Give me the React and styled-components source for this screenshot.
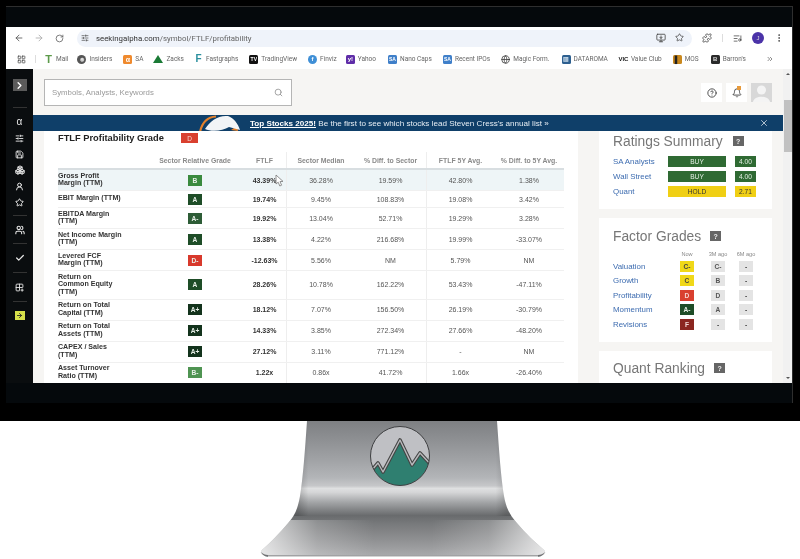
import React from 'react';
import styled, { createGlobalStyle } from 'styled-components';
import {
  ArrowLeft, ArrowRight, RotateCw, SlidersHorizontal, Star, Puzzle, MonitorDown, ListMusic, EllipsisVertical,
  ChevronRight, Search, CircleHelp, Bell, X, Save, UserRound, Users, Check, Grid2x2Plus, Boxes,
  ChevronsRight, Globe, LayoutGrid,
} from 'lucide-react';

const GlobalStyle = createGlobalStyle`
  html, body { margin: 0; padding: 0; background: #fff; }
  body { font-family: "Liberation Sans", Arial, sans-serif; width: 800px; height: 559px; overflow: hidden; }
`;

const Page = styled.div`
  width: 800px;
  height: 559px;
  display: flex;
  flex-direction: column;
  overflow: hidden;
`;

const Monitor = styled.div`
  width: 800px;
  background: #000;
  padding: 6px 7px 18px 6px;
  box-sizing: border-box;
`;

const Bezel = styled.div`
  background: #05090c;
  border-top: 1px solid #2e2e2e;
  border-right: 1px solid #2e2e2e;
  padding: 20px 0;
`;

const Screen = styled.div`
  position: relative;
  height: 356px;
  display: flex;
  flex-direction: column;
  background: #fff;
  overflow: hidden;
  filter: blur(0.45px);
`;

const Toolbar = styled.div`
  height: 22px;
  display: flex;
  align-items: center;
  padding-left: 3px;
  color: #555;
`;

const NavBtn = styled.span`
  width: 20px;
  display: flex;
  justify-content: center;
  color: ${p => p.$dim ? '#aaa' : '#555'};
`;

const Omnibox = styled.div`
  margin-left: 8px;
  width: 615px;
  height: 17px;
  border-radius: 9px;
  background: #eff3fa;
  display: flex;
  align-items: center;
  padding: 0 8px 0 4px;
  box-sizing: border-box;
  gap: 7px;
`;

const UrlText = styled.span`
  flex: 1;
  font-family: Roboto, "Liberation Sans", sans-serif;
  font-size: 7.85px;
  color: #666;
  b { font-weight: 400; color: #333; }
`;

const OmniIcons = styled.div`
  display: flex;
  gap: 9px;
  color: #444;
`;

const ToolIcons = styled.div`
  margin-left: 10px;
  display: flex;
  align-items: center;
  gap: 10px;
  color: #444;
`;

const ToolSep = styled.span`
  width: 1px;
  height: 8px;
  background: #ddd;
`;

const Avatar = styled.span`
  width: 12px;
  height: 12px;
  border-radius: 50%;
  background: #4b33a8;
  color: #ddd;
  font-size: 6px;
  display: flex;
  align-items: center;
  justify-content: center;
`;

const Bookmarks = styled.div`
  height: 20px;
  display: flex;
  align-items: center;
  padding-left: 11px;
  font-family: Roboto, "Liberation Sans", sans-serif;
  font-size: 6.5px;
  color: #666;
  white-space: nowrap;
`;

const Mark = styled.span`
  display: flex;
  align-items: center;
  gap: 3px;
  margin-right: ${p => p.$gap ?? 10}px;
`;

const Fav = styled.span`
  width: 9px;
  height: 9px;
  display: flex;
  align-items: center;
  justify-content: center;
  background: ${p => p.$bg || 'transparent'};
  color: ${p => p.$fg || '#333'};
  border-radius: ${p => p.$round ? '50%' : '1.5px'};
  font-size: ${p => p.$size || 6}px;
  font-weight: 700;
  font-family: "Liberation Sans", sans-serif;
  line-height: 1;
`;

const Tri = styled.span`
  width: 0;
  height: 0;
  border-left: 5px solid transparent;
  border-right: 5px solid transparent;
  border-bottom: 8px solid #1a7a35;
`;

const BarSep = styled.span`
  width: 1px;
  height: 8px;
  background: #ddd;
  margin-right: 8px;
`;

const Body = styled.div`
  flex: 1;
  min-height: 0;
  display: flex;
`;

const Sidebar = styled.nav`
  width: 27px;
  flex: none;
  background: #0a0d0f;
  display: flex;
  flex-direction: column;
  align-items: center;
  color: #e8e8e8;
  padding-top: 10px;
  box-sizing: border-box;
`;

const Expand = styled.span`
  width: 14px;
  height: 12px;
  background: #5a5a5a;
  color: #fff;
  display: flex;
  align-items: center;
  justify-content: center;
`;

const SideRule = styled.span`
  width: 14px;
  height: 1px;
  background: #333;
  margin: ${p => p.$top ?? 6}px 0 ${p => p.$bottom ?? 6}px;
  flex: none;
`;

const SideIcon = styled.span`
  height: 16px;
  display: flex;
  align-items: center;
  justify-content: center;
  font-size: 10px;
  line-height: 1;
`;

const NewBtn = styled.span`
  width: 10px;
  height: 9px;
  background: #d6e04a;
  color: #222;
  display: flex;
  align-items: center;
  justify-content: center;
`;

const Main = styled.div`
  flex: 1;
  min-width: 0;
  display: flex;
  flex-direction: column;
  background: #f6f5f3;
  overflow: hidden;
`;

const Header = styled.header`
  height: 46px;
  flex: none;
  display: flex;
  align-items: flex-start;
  padding: 10px 11px 0;
  box-sizing: border-box;
`;

const SearchBox = styled.div`
  width: 248px;
  height: 27px;
  background: #fff;
  border: 1px solid #b5b5b5;
  box-sizing: border-box;
  display: flex;
  align-items: center;
  justify-content: space-between;
  padding: 0 8px 0 7px;
  font-size: 7.8px;
  color: #9a9a9a;
`;

const HeadActions = styled.div`
  margin-left: auto;
  display: flex;
  gap: 4px;
  padding-top: 4px;
`;

const HeadBtn = styled.span`
  width: 21px;
  height: 19px;
  background: ${p => p.$grey ? '#d8d8d8' : '#fff'};
  color: #333;
  display: flex;
  align-items: center;
  justify-content: center;
  position: relative;
  overflow: hidden;
`;

const BellDot = styled.span`
  position: absolute;
  top: 3px;
  right: 6px;
  width: 4px;
  height: 4px;
  background: #e79a3c;
`;

const AvatarShape = styled.svg`
  width: 21px;
  height: 19px;
`;

const Banner = styled.div`
  position: relative;
  height: 16px;
  flex: none;
  background: #0f3f69;
  color: #e6edf3;
  font-size: 8.1px;
  display: flex;
  align-items: center;
  padding-left: 217px;
  white-space: pre;
  b { text-decoration: underline; color: #fff; }
`;

const BannerLogo = styled.svg`
  position: absolute;
  left: 165px;
  top: 0;
  width: 42px;
  height: 16px;
`;

const BannerClose = styled.span`
  position: absolute;
  right: 14px;
  top: 3px;
  color: #cfd9e2;
  display: flex;
`;

const Content = styled.div`
  flex: 1;
  min-height: 0;
  display: flex;
  gap: 21px;
  padding: 0 11px;
  overflow: hidden;
`;

const TableCard = styled.section`
  width: 534px;
  flex: none;
  background: #fff;
  padding: 0 14px;
  box-sizing: border-box;
`;

const TitleRow = styled.div`
  height: 14px;
  display: flex;
  align-items: center;
  h2 { margin: 0; font-size: 9.3px; color: #222; font-weight: 700; width: 123px; white-space: nowrap; }
`;

const TitleBadge = styled.span`
  width: 17px;
  height: 10px;
  background: #d9402f;
  color: #f5d5d0;
  font-size: 6.5px;
  display: flex;
  align-items: center;
  justify-content: center;
`;

const Row = styled.div`
  display: grid;
  grid-template-columns: 107px 60px 62px 68px 71px 68px 70px;
  background: ${p => p.$active ? '#eef5f7' : 'transparent'};
  border-bottom: ${p => p.$head ? '2px solid #d8dee1' : '1px solid #f0f0f0'};
`;

const HeadRow = styled(Row)`
  margin-top: 7px;
  height: 16px;
`;

const Cell = styled.div`
  box-sizing: border-box;
  display: flex;
  align-items: center;
  justify-content: center;
  padding: 2.5px 0;
  font-size: 7px;
  color: #555;
  white-space: nowrap;
  ${p => p.$rule === 'right' && 'border-right: 1px solid #eee;'}
  ${p => p.$rule === 'left' && 'border-left: 1px solid #eee;'}
`;

const FtlfCell = styled(Cell)`
  padding-left: 18px;
  font-weight: 700;
  color: #333;
`;

const HeadCell = styled(Cell)`
  padding: 0;
  font-weight: 700;
  color: #8a8a8a;
  font-size: 6.9px;
`;

const HeadFtlf = styled(HeadCell)`
  padding-left: 18px;
`;

const Metric = styled.div`
  font-size: 7.1px;
  line-height: 7.5px;
  font-weight: 700;
  color: #333;
  padding: 2.5px 0;
  white-space: pre-line;
  align-self: center;
`;

const Grade = styled.span`
  width: 14px;
  height: 11px;
  background: ${p => p.$bg};
  color: ${p => p.$fg || '#e8f0e8'};
  font-size: 6.6px;
  font-weight: 700;
  display: flex;
  align-items: center;
  justify-content: center;
`;

const Rail = styled.aside`
  width: 173px;
  flex: none;
  display: flex;
  flex-direction: column;
  gap: 9px;
`;

const RailCard = styled.section`
  flex: none;
  background: #fff;
  height: ${p => p.$h}px;
  padding: ${p => p.$top ?? 10}px 14px 0;
  box-sizing: border-box;
`;

const RailTitle = styled.div`
  display: flex;
  align-items: center;
  gap: ${p => p.$gap ?? 10}px;
  height: 16px;
  font-size: 13.8px;
  color: #777;
  white-space: nowrap;
`;

const Help = styled.span`
  width: 11px;
  height: 10px;
  background: #666;
  color: #eee;
  font-size: 7px;
  font-weight: 700;
  display: flex;
  align-items: center;
  justify-content: center;
`;

const RatingList = styled.div`
  margin-top: 5px;
`;

const RatingRow = styled.div`
  display: grid;
  grid-template-columns: 46px 58px 21px;
  column-gap: 9px;
  align-items: center;
  height: 15px;
  font-size: 7.9px;
  color: #3d6cb0;
  white-space: nowrap;
`;

const Pill = styled.span`
  height: 11px;
  background: ${p => p.$bg};
  color: ${p => p.$fg};
  font-size: 6.6px;
  display: flex;
  align-items: center;
  justify-content: center;
`;

const FactorGrid = styled.div`
  display: grid;
  grid-template-columns: 67px 14px 31px 28px;
  align-items: center;
  justify-items: end;
`;

const FactorHead = styled(FactorGrid)`
  height: 11px;
  margin-top: 4px;
  font-size: 5.6px;
  color: #888;
`;

const HeadLabel = styled.span`
  width: 14px;
  display: flex;
  justify-content: center;
  white-space: nowrap;
`;

const FactorRow = styled(FactorGrid)`
  height: 14.5px;
  font-size: 7.9px;
  color: #3d6cb0;
`;

const FactorName = styled.span`
  justify-self: start;
`;

const Scrollbar = styled.div`
  position: relative;
  width: 9px;
  flex: none;
  background: #f1f1f1;
`;

const Thumb = styled.div`
  position: absolute;
  top: 31px;
  left: 1px;
  right: 0;
  height: 52px;
  background: #c1c1c1;
`;

const ScrollArrow = styled.span`
  position: absolute;
  left: 2.5px;
  width: 0;
  height: 0;
  border-left: 2px solid transparent;
  border-right: 2px solid transparent;
  ${p => p.$up
    ? 'top: 4px; border-bottom: 2.5px solid #555;'
    : 'bottom: 4px; border-top: 2.5px solid #555;'}
`;

const Pointer = styled.svg`
  position: absolute;
  left: 269px;
  top: 147px;
  width: 9px;
  height: 13px;
`;

const StandWrap = styled.svg`
  width: 286px;
  height: 138px;
  flex: none;
  display: block;
  margin-left: 260px;
`;

const rows = [
  { label: 'Gross Profit\nMargin (TTM)', grade: 'B', bg: '#3a8a3e', v: ['43.39%', '36.28%', '19.59%', '42.80%', '1.38%'], active: true },
  { label: 'EBIT Margin (TTM)', grade: 'A', bg: '#1e4d27', v: ['19.74%', '9.45%', '108.83%', '19.08%', '3.42%'] },
  { label: 'EBITDA Margin\n(TTM)', grade: 'A-', bg: '#2d5c36', v: ['19.92%', '13.04%', '52.71%', '19.29%', '3.28%'] },
  { label: 'Net Income Margin\n(TTM)', grade: 'A', bg: '#1e4d27', v: ['13.38%', '4.22%', '216.68%', '19.99%', '-33.07%'] },
  { label: 'Levered FCF\nMargin (TTM)', grade: 'D-', bg: '#d8392c', v: ['-12.63%', '5.56%', 'NM', '5.79%', 'NM'] },
  { label: 'Return on\nCommon Equity\n(TTM)', grade: 'A', bg: '#1e4d27', v: ['28.26%', '10.78%', '162.22%', '53.43%', '-47.11%'] },
  { label: 'Return on Total\nCapital (TTM)', grade: 'A+', bg: '#13331c', v: ['18.12%', '7.07%', '156.50%', '26.19%', '-30.79%'] },
  { label: 'Return on Total\nAssets (TTM)', grade: 'A+', bg: '#13331c', v: ['14.33%', '3.85%', '272.34%', '27.66%', '-48.20%'] },
  { label: 'CAPEX / Sales\n(TTM)', grade: 'A+', bg: '#13331c', v: ['27.12%', '3.11%', '771.12%', '-', 'NM'] },
  { label: 'Asset Turnover\nRatio (TTM)', grade: 'B-', bg: '#4f9452', v: ['1.22x', '0.86x', '41.72%', '1.66x', '-26.40%'] },
];

const ratings = [
  { name: 'SA Analysts', call: 'BUY', score: '4.00', bg: '#2f6a33', fg: '#e6f0e6' },
  { name: 'Wall Street', call: 'BUY', score: '4.00', bg: '#2f6a33', fg: '#e6f0e6' },
  { name: 'Quant', call: 'HOLD', score: '2.71', bg: '#f0cf14', fg: '#333' },
];

const factors = [
  { name: 'Valuation', now: 'C-', bg: '#f0d818', fg: '#444', m3: 'C-', m6: '-' },
  { name: 'Growth', now: 'C', bg: '#f0d818', fg: '#444', m3: 'B', m6: '-' },
  { name: 'Profitability', now: 'D', bg: '#d9402f', fg: '#f5d5d0', m3: 'D', m6: '-' },
  { name: 'Momentum', now: 'A-', bg: '#1e4d27', fg: '#e6f0e6', m3: 'A', m6: '-' },
  { name: 'Revisions', now: 'F', bg: '#8b2620', fg: '#f2d9d6', m3: '-', m6: '-' },
];

const SILHOUETTE = 'M307 421 L497 421 C499 450 501 478 504 496 C506 508 510 515 516 522 C526 534 536 543 544 550 C547 553 544 556 538 556 L268 556 C262 556 259 553 262 550 C270 543 280 533 289 522 C295 515 298 508 300 496 C303 478 305 450 307 421 Z';

function Stand() {
  return (
    <StandWrap viewBox="260 421 286 138" aria-hidden="true">
      <defs>
        <linearGradient id="metal" x1="0" y1="421" x2="0" y2="556" gradientUnits="userSpaceOnUse">
          <stop offset="0" stopColor="#7e8083" />
          <stop offset="0.14" stopColor="#8e9093" />
          <stop offset="0.3" stopColor="#a2a4a7" />
          <stop offset="0.42" stopColor="#b3b5b8" />
          <stop offset="0.48" stopColor="#c6c7c9" />
          <stop offset="0.5" stopColor="#dfe0e1" />
          <stop offset="0.53" stopColor="#d4d5d6" />
          <stop offset="0.6" stopColor="#a4a6a8" />
          <stop offset="0.7" stopColor="#696b6d" />
          <stop offset="0.76" stopColor="#77797b" />
          <stop offset="0.88" stopColor="#8f9092" />
          <stop offset="1" stopColor="#a9aaac" />
        </linearGradient>
        <linearGradient id="edges" x1="260" y1="0" x2="546" y2="0" gradientUnits="userSpaceOnUse">
          <stop offset="0" stopColor="#fff" stopOpacity="0.75" />
          <stop offset="0.2" stopColor="#fff" stopOpacity="0.2" />
          <stop offset="0.4" stopColor="#fff" stopOpacity="0" />
          <stop offset="0.6" stopColor="#fff" stopOpacity="0" />
          <stop offset="0.8" stopColor="#fff" stopOpacity="0.2" />
          <stop offset="1" stopColor="#fff" stopOpacity="0.75" />
        </linearGradient>
        <linearGradient id="side" x1="298" y1="0" x2="506" y2="0" gradientUnits="userSpaceOnUse">
          <stop offset="0" stopColor="#000" stopOpacity="0.18" />
          <stop offset="0.05" stopColor="#000" stopOpacity="0" />
          <stop offset="0.95" stopColor="#000" stopOpacity="0" />
          <stop offset="1" stopColor="#000" stopOpacity="0.14" />
        </linearGradient>
        <clipPath id="shape">
          <path d={SILHOUETTE} />
        </clipPath>
        <clipPath id="badge">
          <circle cx="400" cy="456" r="29.5" />
        </clipPath>
      </defs>
      <path d={SILHOUETTE} fill="url(#metal)" />
      <g clipPath="url(#shape)">
        <rect x="260" y="421" width="286" height="95" fill="url(#side)" />
        <rect x="260" y="520" width="286" height="36" fill="url(#edges)" />
      </g>
      <path d="M261 552 C263 556 266 557 270 557 L536 557 C540 557 543 556 545 552 C543 554 541 555 538 555 L268 555 C265 555 263 554 261 552 Z" fill="#6f7173" />
      <rect x="268" y="555.6" width="270" height="1.2" fill="#ededed" />
      <circle cx="400" cy="456" r="29.5" fill="#bfc0c4" />
      <g clipPath="url(#badge)">
        <path d="M372 490 L372 470 L378 463 L383 472 L400 440 L412 465 L420 453 L432 466 L432 490 Z" fill="#2f7f70" />
        <path d="M372 470 L378 463 L383 472 L400 440 L412 465 L420 453 L432 466" fill="none" stroke="#444" strokeWidth="3.6" strokeLinejoin="round" />
        <path d="M372 470 L378 463 L383 472 L400 440 L412 465 L420 453 L432 466" fill="none" stroke="#b9babd" strokeWidth="1.4" strokeLinejoin="round" />
      </g>
      <circle cx="400" cy="456" r="29.5" fill="none" stroke="#3f4042" strokeWidth="1" />
    </StandWrap>
  );
}

export default function App() {
  return (
    <Page>
      <GlobalStyle />
      <Monitor>
        <Bezel>
          <Screen>
            <Toolbar>
              <NavBtn><ArrowLeft size={10} /></NavBtn>
              <NavBtn $dim><ArrowRight size={10} /></NavBtn>
              <NavBtn><RotateCw size={9} /></NavBtn>
              <Omnibox>
                <SlidersHorizontal size={8} color="#444" />
                <UrlText><b>seekingalpha.com</b>/symbol/FTLF/profitability</UrlText>
                <OmniIcons>
                  <MonitorDown size={10} />
                  <Star size={9} />
                </OmniIcons>
              </Omnibox>
              <ToolIcons>
                <Puzzle size={10} />
                <ToolSep />
                <ListMusic size={9} />
                <Avatar>J</Avatar>
                <EllipsisVertical size={10} />
              </ToolIcons>
            </Toolbar>
            <Bookmarks>
              <Mark $gap={9}><LayoutGrid size={9} color="#444" /></Mark>
              <BarSep />
              <Mark $gap={9}><Fav $fg="#5c9a4a" $size={11}>T</Fav>Mail</Mark>
              <Mark $gap={11}><Fav $round $bg="#555" $fg="#ddd" $size={5}>◉</Fav>Insiders</Mark>
              <Mark $gap={10}><Fav $bg="#ef8a2e" $fg="#fff" $size={7}>α</Fav>SA</Mark>
              <Mark $gap={10}><Tri />Zacks</Mark>
              <Mark $gap={11}><Fav $fg="#2a8f9e" $size={10}>F</Fav>Fastgraphs</Mark>
              <Mark $gap={11}><Fav $bg="#111" $fg="#fff" $size={5}>TV</Fav>TradingView</Mark>
              <Mark $gap={9}><Fav $round $bg="#3f8fd6" $fg="#fff" $size={6}>f</Fav>Finviz</Mark>
              <Mark $gap={12}><Fav $bg="#5f2da8" $fg="#fff" $size={6}>y!</Fav>Yahoo</Mark>
              <Mark $gap={11}><Fav $bg="#3f7fc9" $fg="#fff" $size={5}>SA</Fav>Nano Caps</Mark>
              <Mark $gap={11}><Fav $bg="#3f7fc9" $fg="#fff" $size={5}>SA</Fav>Recent IPOs</Mark>
              <Mark $gap={12}><Globe size={9} color="#333" />Magic Form.</Mark>
              <Mark $gap={11}><Fav $bg="#2d5f8f" $fg="#cfe0ee" $size={6}>▥</Fav>DATAROMA</Mark>
              <Mark $gap={11}><Fav $fg="#222" $size={6}>VIC</Fav>Value Club</Mark>
              <Mark $gap={12}><Fav $bg="#c9881e" $fg="#222" $size={7}>▌</Fav>MOS</Mark>
              <Mark $gap={20}><Fav $bg="#2a2a2a" $fg="#ddd" $size={6}>B</Fav>Barron's</Mark>
              <Mark $gap={0}><ChevronsRight size={8} color="#555" /></Mark>
            </Bookmarks>
            <Body>
              <Sidebar>
                <Expand><ChevronRight size={11} strokeWidth={3} /></Expand>
                <SideRule $top={16} $bottom={6} />
                <SideIcon>α</SideIcon>
                <SideIcon><SlidersHorizontal size={9} strokeWidth={2.4} /></SideIcon>
                <SideIcon><Save size={9} strokeWidth={2.4} /></SideIcon>
                <SideIcon><Boxes size={10} strokeWidth={2.6} /></SideIcon>
                <SideIcon><UserRound size={9} strokeWidth={2.6} /></SideIcon>
                <SideIcon><Star size={9} strokeWidth={2.6} /></SideIcon>
                <SideRule $top={5} $bottom={6} />
                <SideIcon><Users size={10} strokeWidth={2.6} /></SideIcon>
                <SideRule $top={5} $bottom={6} />
                <SideIcon><Check size={10} strokeWidth={3} /></SideIcon>
                <SideRule $top={6} $bottom={6} />
                <SideIcon><Grid2x2Plus size={9} strokeWidth={2.4} /></SideIcon>
                <SideRule $top={6} $bottom={9} />
                <NewBtn><ArrowRight size={7} strokeWidth={3} /></NewBtn>
              </Sidebar>
              <Main>
                <Header>
                  <SearchBox>
                    Symbols, Analysts, Keywords
                    <Search size={9} color="#888" />
                  </SearchBox>
                  <HeadActions>
                    <HeadBtn><CircleHelp size={10} /></HeadBtn>
                    <HeadBtn><Bell size={10} /><BellDot /></HeadBtn>
                    <HeadBtn $grey>
                      <AvatarShape viewBox="0 0 21 19">
                        <circle cx="10.5" cy="7" r="4.5" fill="#f4f4f4" />
                        <path d="M2 19 C3 12 18 12 19 19 Z" fill="#f4f4f4" />
                      </AvatarShape>
                    </HeadBtn>
                  </HeadActions>
                </Header>
                <Banner>
                  <BannerLogo viewBox="0 0 42 16">
                    <path d="M2 17 C4 8 9 2 18 1.5" fill="none" stroke="#e5812a" strokeWidth="2.2" />
                    <path d="M33 15 L40 16 L39 11 Z" fill="#e5812a" />
                    <path d="M7 14 C12 6 20 0 30 1 C36 3 40 9 42 15 L31 12 C25 16 13 17 7 14 Z" fill="#f2f4f6" />
                  </BannerLogo>
                  <b>Top Stocks 2025!</b> Be the first to see which stocks lead Steven Cress's annual list »
                  <BannerClose><X size={10} /></BannerClose>
                </Banner>
                <Content>
                  <TableCard>
                    <TitleRow>
                      <h2>FTLF Profitability Grade</h2>
                      <TitleBadge>D</TitleBadge>
                    </TitleRow>
                    <HeadRow $head>
                      <HeadCell />
                      <HeadCell>Sector Relative Grade</HeadCell>
                      <HeadFtlf $rule="right">FTLF</HeadFtlf>
                      <HeadCell>Sector Median</HeadCell>
                      <HeadCell>% Diff. to Sector</HeadCell>
                      <HeadCell $rule="left">FTLF 5Y Avg.</HeadCell>
                      <HeadCell>% Diff. to 5Y Avg.</HeadCell>
                    </HeadRow>
                    {rows.map(r => (
                      <Row key={r.label} $active={r.active}>
                        <Metric>{r.label}</Metric>
                        <Cell><Grade $bg={r.bg}>{r.grade}</Grade></Cell>
                        <FtlfCell $rule="right">{r.v[0]}</FtlfCell>
                        <Cell>{r.v[1]}</Cell>
                        <Cell>{r.v[2]}</Cell>
                        <Cell $rule="left">{r.v[3]}</Cell>
                        <Cell>{r.v[4]}</Cell>
                      </Row>
                    ))}
                  </TableCard>
                  <Rail>
                    <RailCard $h={78} $top={2}>
                      <RailTitle>Ratings Summary <Help>?</Help></RailTitle>
                      <RatingList>
                        {ratings.map(r => (
                          <RatingRow key={r.name}>
                            {r.name}
                            <Pill $bg={r.bg} $fg={r.fg}>{r.call}</Pill>
                            <Pill $bg={r.bg} $fg={r.fg}>{r.score}</Pill>
                          </RatingRow>
                        ))}
                      </RatingList>
                    </RailCard>
                    <RailCard $h={124}>
                      <RailTitle $gap={9}>Factor Grades <Help>?</Help></RailTitle>
                      <FactorHead>
                        <span />
                        <HeadLabel>Now</HeadLabel>
                        <HeadLabel>3M ago</HeadLabel>
                        <HeadLabel>6M ago</HeadLabel>
                      </FactorHead>
                      {factors.map(f => (
                        <FactorRow key={f.name}>
                          <FactorName>{f.name}</FactorName>
                          <Grade $bg={f.bg} $fg={f.fg}>{f.now}</Grade>
                          <Grade $bg="#e4e4e4" $fg="#555">{f.m3}</Grade>
                          <Grade $bg="#e4e4e4" $fg="#555">{f.m6}</Grade>
                        </FactorRow>
                      ))}
                    </RailCard>
                    <RailCard $h={60} $top={9}>
                      <RailTitle $gap={9}>Quant Ranking <Help>?</Help></RailTitle>
                    </RailCard>
                  </Rail>
                </Content>
              </Main>
              <Scrollbar>
                <ScrollArrow $up />
                <Thumb />
                <ScrollArrow />
              </Scrollbar>
            </Body>
            <Pointer viewBox="0 0 9 13">
              <path d="M1 1 L1 10 L3.2 8.2 L4.8 12 L6.6 11.2 L5 7.6 L8 7.4 Z" fill="#fff" stroke="#777" strokeWidth="0.8" />
            </Pointer>
          </Screen>
        </Bezel>
      </Monitor>
      <Stand />
    </Page>
  );
}
